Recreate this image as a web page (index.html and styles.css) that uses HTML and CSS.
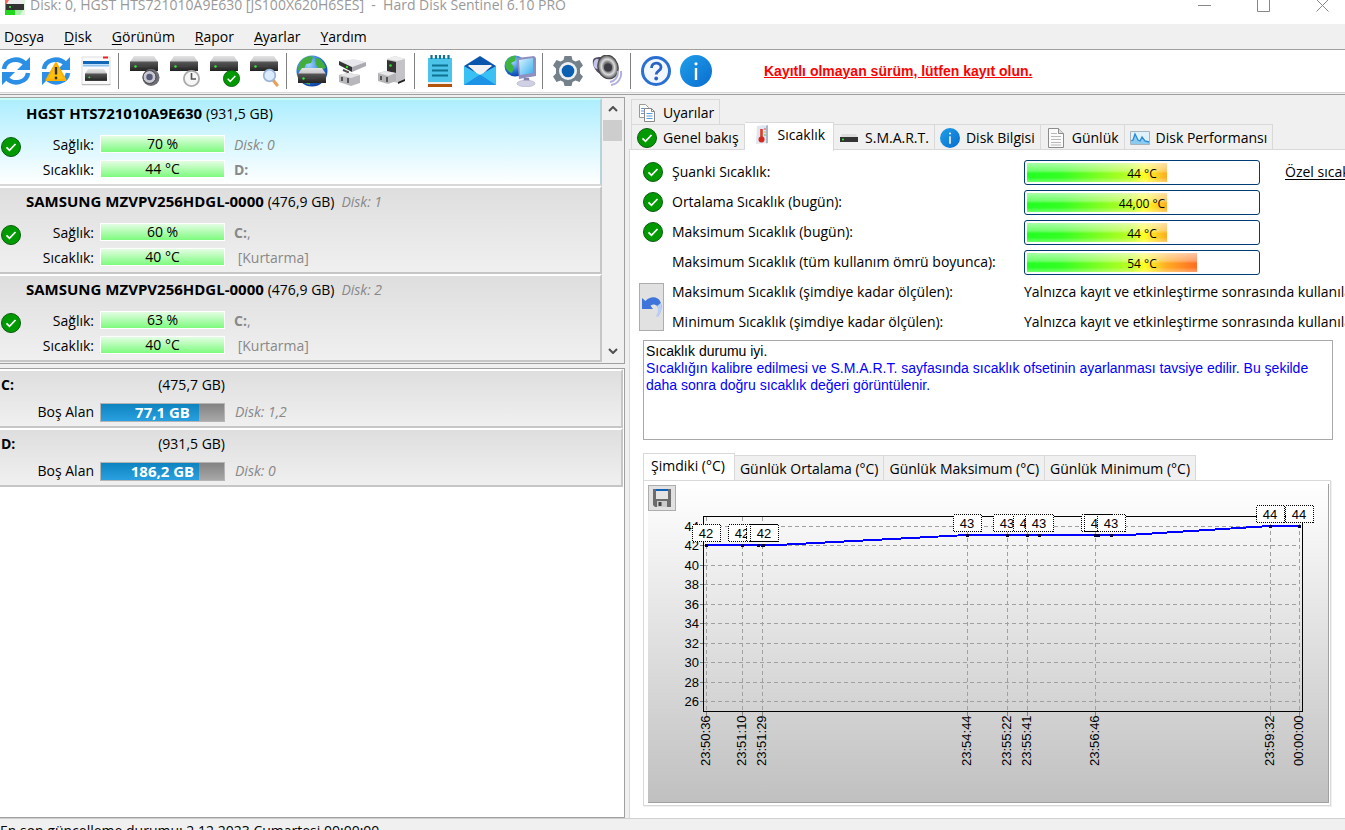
FILE: index.html
```html
<!DOCTYPE html>
<html lang="tr">
<head>
<meta charset="utf-8">
<title>Hard Disk Sentinel 6.10 PRO</title>
<link rel="stylesheet" href="styles.css">
</head>
<body>
<svg class="defs" aria-hidden="true">
  <defs>
    <linearGradient id="gTop" x1="0" y1="0" x2="0" y2="1"><stop offset="0" stop-color="#e4e4e4"/><stop offset="1" stop-color="#c4c4c8"/></linearGradient>
    <linearGradient id="gBody" x1="0" y1="0" x2="0" y2="1"><stop offset="0" stop-color="#5a5a5a"/><stop offset="1" stop-color="#222"/></linearGradient>
    <linearGradient id="gBlue" x1="0" y1="0" x2="1" y2="1"><stop offset="0" stop-color="#1fa0e8"/><stop offset="1" stop-color="#0a6cd0"/></linearGradient>
    <linearGradient id="gSky" x1="0" y1="0" x2="1" y2="1"><stop offset="0" stop-color="#d8f4ff"/><stop offset="1" stop-color="#3fb0ee"/></linearGradient>
    <radialGradient id="gGlobe" cx=".4" cy=".3" r=".8"><stop offset="0" stop-color="#9fd4ff"/><stop offset=".6" stop-color="#1f6fd0"/><stop offset="1" stop-color="#0a2f90"/></radialGradient>
    <radialGradient id="gCone"><stop offset="0" stop-color="#333"/><stop offset=".4" stop-color="#777"/><stop offset=".65" stop-color="#ddd"/><stop offset="1" stop-color="#555"/></radialGradient>
    <linearGradient id="gChart" x1="0" y1="0" x2="0" y2="1"><stop offset="0" stop-color="#fff"/><stop offset="1" stop-color="#c0c0c0"/></linearGradient>
    <symbol id="ok" viewBox="0 0 20 20"><circle cx="10" cy="10" r="9.5" fill="#009a00" stroke="#0b5c10"/><path d="M5.5 10.3l3 3 6-6.3" fill="none" stroke="#fff" stroke-width="1.8"/></symbol>
    <symbol id="info" viewBox="0 0 32 32"><circle cx="16" cy="16" r="16" fill="url(#gBlue)"/><path d="M16 13v12" stroke="#fff" stroke-width="2.4"/><circle cx="16" cy="8.8" r="1.6" fill="#fff"/></symbol>
    <symbol id="disk" viewBox="0 0 28 15"><path d="M4 0h20l4 6H0z" fill="url(#gTop)"/><path d="M0 5.5h28V15H0z" fill="url(#gBody)"/><path d="M1 10.5h17" stroke="#444"/><circle cx="5.5" cy="10.5" r="1.2" fill="#2ef02e"/></symbol>
    <symbol id="arrows" viewBox="0 0 32 32"><g fill="none" stroke="#2c8fe6" stroke-width="4.5"><path d="M4 14C5 5 18 1 25.500 9"/><path d="M28 18C27 27 14 31 6.500 23"/></g><path d="M30 2v13H17zM2 30V17h13z" fill="#2c8fe6"/></symbol>
    <symbol id="undo" viewBox="0 0 20 20"><path d="M0 1l3.500 3C8-1 16-1 18.500 5c2 5 .5 11-3 15 1.500-5 1.500-8.500-.5-11-1.800-2-4.500-2-6.500-.2L11 12H0z" fill="#3f74da"/><path d="M18.800 6c1.800 5 .2 10.500-3.300 14l-1.500-.5c2-4 2.500-8 1-10.500z" fill="#b9cff5"/></symbol>
    <symbol id="page" viewBox="0 0 16 20"><path d="M.5.5h10l5 5v14H.5z" fill="#fbfbfb" stroke="#8c8c8c"/><path d="M10.500.5v5h5" fill="#ddd" stroke="#8c8c8c"/><path d="M3 5.500h6M3 8.500h10M3 11.500h10M3 14.500h10M3 17h10" stroke="#b8b8b8"/></symbol>
  </defs>
</svg>
<div class="app">
  <header class="titlebar">
    <svg class="app-icon" viewBox="0 0 20 20"><path d="M0 0h20L0 20z" fill="#f66"/><path d="M20 0v20H0z" fill="#dff5df"/><path d="M0 20V8l10 5v7z" fill="#20d820"/><path d="M10 12l8 3-3 5h-5z" fill="#a6f0a6"/><path d="M4 5h12l3 5H1z" fill="#eee"/><path d="M1 9h18v6H1z" fill="#333"/><circle cx="5" cy="12" r="1" fill="#3f3"/></svg>
    <h1 class="title">Disk: 0, HGST HTS721010A9E630 [JS100X620H6SES] &nbsp;- &nbsp;Hard Disk Sentinel 6.10 PRO</h1>
    <div class="window-buttons">
      <button aria-label="Simge durumuna küçült"><svg viewBox="0 0 13 13"><path d="M0 6.500h13"/></svg></button>
      <button aria-label="Ekranı kapla"><svg viewBox="0 0 13 13"><path d="M.5.5h12v12H.5z"/></svg></button>
      <button aria-label="Kapat"><svg viewBox="0 0 13 13"><path d="M.5.5l12 12M12.500.5l-12 12"/></svg></button>
    </div>
  </header>
  <nav class="menubar">
    <button>D<u>o</u>sya</button><button><u>D</u>isk</button><button><u>G</u>örünüm</button><button><u>R</u>apor</button><button><u>A</u>yarlar</button><button><u>Y</u>ardım</button>
  </nav>
  <div class="toolbar" role="toolbar">
    <button aria-label="Yenile"><svg viewBox="0 0 32 32"><use href="#arrows"/></svg></button>
    <button aria-label="Uyarıları yenile"><svg viewBox="0 0 32 32"><use href="#arrows"/><path d="M16 8l9.500 17h-19z" fill="#ffc20e" stroke="#ffb000" stroke-width="2" stroke-linejoin="round"/><path d="M16 12v7.500" stroke="#333" stroke-width="2.4"/><circle cx="16" cy="23" r="1.400" fill="#333"/></svg></button>
    <button aria-label="Küçük pencere"><svg viewBox="0 0 32 32"><path d="M2 2h28v28H2z" fill="#fafafa" stroke="#ddd"/><path d="M2 29.500h28.500" stroke="#bbb"/><path d="M23 2.500h5" stroke="#e22" stroke-width="2"/><path d="M3 7.500h26" stroke="#1267b8" stroke-width="3"/><path d="M3 10.500h26" stroke="#8fc4f0" stroke-width="2"/><use href="#disk" x="5" y="14" width="22" height="12"/></svg></button>
    <i class="sep"></i>
    <button aria-label="Akustik ayarlar"><svg viewBox="0 0 32 32"><use href="#disk" x="2" y="1" width="28" height="15"/><circle cx="23" cy="22.500" r="8.500" fill="#6d6d75"/><circle cx="21.500" cy="22" r="6.500" fill="#c8c8d4" stroke="#444"/><circle cx="21.500" cy="22" r="3.200" fill="#555b78"/></svg></button>
    <button aria-label="Zamanlanmış test"><svg viewBox="0 0 32 32"><use href="#disk" x="2" y="1" width="28" height="15"/><circle cx="23.500" cy="23.500" r="7.600" fill="#f6f6f6" stroke="#aaa" stroke-width="1.800"/><path d="M23.500 18v6h4.500" fill="none" stroke="#555" stroke-width="1.600"/></svg></button>
    <button aria-label="Disk testi"><svg viewBox="0 0 32 32"><use href="#disk" x="2" y="1" width="28" height="15"/><use href="#ok" x="15" y="15" width="17" height="17"/></svg></button>
    <button aria-label="Yüzey testi"><svg viewBox="0 0 32 32"><use href="#disk" x="2" y="1" width="28" height="15"/><path d="M25 25l4 5" stroke="#e5a05a" stroke-width="3.200" stroke-linecap="round"/><circle cx="21.500" cy="20.500" r="5.800" fill="#d9edff" stroke="#9db6d6" stroke-width="1.800"/></svg></button>
    <i class="sep"></i>
    <button aria-label="Ağ diski"><svg viewBox="0 0 32 32"><circle cx="16" cy="16" r="15.500" fill="url(#gGlobe)"/><path d="M3 9C7 2 14 0 17 2l-2 6-5 1-3 7-5-1zM19 3c6 0 9 5 11 10l-6 2-4-5zM6 27l8-1v4z" fill="#42ad3c"/><use href="#disk" x="2" y="13" width="28" height="15"/></svg></button>
    <button aria-label="Disk bağlantısı"><svg viewBox="0 0 32 32"><path d="M3 6l15-2 12 3-14 5z" fill="#e8e8ec"/><path d="M3 6l13 6v5L3 10z" fill="#333"/><path d="M16 12l14-5v4l-14 6z" fill="#aaaab0"/><circle cx="11" cy="12" r="1.200" fill="#2ee02e"/><path d="M7 15l5 2-1 4" fill="none" stroke="#555" stroke-width="2"/><path d="M3 20l9-2 12 2v8l-9 3-12-4z" fill="#b8b8bc"/><path d="M3 20l9-2 12 2-9 3z" fill="#e4e4e6"/><path d="M6 22v4M12 23v5" stroke="#555" stroke-width="2"/></svg></button>
    <button aria-label="Disk yuvası"><svg viewBox="0 0 32 32"><path d="M11 4l8-3 10 3v21l-7 3-11-3z" fill="#c4c4c8"/><path d="M11 4l8-3 10 3-8 2z" fill="#eee"/><path d="M11 5l9 2v13l-9-3z" fill="#333"/><circle cx="14.500" cy="10.500" r="1.300" fill="#2ee02e"/><path d="M22 27l7-3v2l-7 3z" fill="#222"/><path d="M2 18l8-2 10 2v8l-8 3-10-3z" fill="#b4b4b8"/><path d="M2 18l8-2 10 2-8 3z" fill="#e8e8ea"/><path d="M5 21v4M11 22v5" stroke="#555" stroke-width="2"/></svg></button>
    <i class="sep"></i>
    <button aria-label="Rapor"><svg viewBox="0 0 32 32"><path d="M4 3h24v24H4z" fill="#4cc3e8"/><path d="M4 27h24v2H4z" fill="#eee"/><path d="M4 29h24v3H4z" fill="#b3540e"/><path d="M7.500 0v4M12 0v4M16 0v4M20 0v4M24.500 0v4" stroke="#14708f" stroke-width="2.200"/><path d="M8 10.500h16M8 15.500h16M8 20.500h16" stroke="#0e7391" stroke-width="2"/></svg></button>
    <button aria-label="E-posta"><svg viewBox="0 0 32 32"><path d="M0 11L16 1l16 10v8H0z" fill="#0b56ad"/><path d="M4 10h24L16 22z" fill="#f2f2f2"/><path d="M0 11l16 9 16-9v19H0z" fill="#39c0f4"/><path d="M4 11h24L16 19z" fill="#f2f2f2"/><path d="M0 30l16-10.500L32 30z" fill="#1c93e4"/></svg></button>
    <button aria-label="Ağ"><svg viewBox="0 0 32 32"><circle cx="11" cy="11" r="10.500" fill="url(#gGlobe)"/><path d="M1 9c2-6 7-9 11-8l-1 5-4 2 3 4-2 6c-4-1-7-5-7-9z" fill="#3eb53e"/><path d="M13 3l17-2 2 2v18l-17 3z" fill="#8f8fc0"/><path d="M15 5l14-2v15l-13 2z" fill="url(#gSky)"/><path d="M20 23h5l1 5h-7z" fill="#8080a8"/><ellipse cx="22" cy="28.500" rx="9" ry="3.300" fill="#d0d0e4" stroke="#a8a8c4" stroke-width=".6"/></svg></button>
    <i class="sep"></i>
    <button aria-label="Ayarlar"><svg viewBox="0 0 32 32"><path d="M12.500 1h7l1 4 3 1.600 4-1.600 3.500 5.500-3 3v5l3 3-3.500 5.500-4-1.600-3 1.600-1 4h-7l-1-4-3-1.600-4 1.600L1 21.500l3-3v-5l-3-3L4.500 5l4 1.600 3-1.600z" fill="#74808a"/><circle cx="16" cy="16" r="9" fill="#eef1f4"/><circle cx="16" cy="16" r="6.300" fill="#0c60b4"/></svg></button>
    <button aria-label="Ses"><svg viewBox="0 0 32 32"><path d="M1 5c1-3 5-3 8-3l7 18-8-1C3 16 0 10 1 5z" fill="#55506e"/><ellipse cx="5" cy="9" rx="3.500" ry="5" fill="#c5c5ea"/><ellipse cx="16" cy="12" rx="10" ry="12" transform="rotate(-18 16 12)" fill="url(#gCone)" stroke="#444"/><circle cx="16" cy="12.500" r="4" fill="#3c3c44"/><path d="M18 27c5-1 8-5 8-11M19 30c7-1 11-7 10-14" fill="none" stroke="#b0b0dc" stroke-width="2"/></svg></button>
    <i class="sep"></i>
    <button aria-label="Yardım"><svg viewBox="0 0 32 32"><circle cx="16" cy="16" r="13.500" fill="#f2f7ff" stroke="#2a6fd2" stroke-width="3"/><path d="M11.500 13c0-6.500 9.500-6 9.500-.8 0 3.800-4.800 3.600-4.800 7.300" fill="none" stroke="#2a62c4" stroke-width="2.800"/><circle cx="16.200" cy="23.500" r="1.900" fill="#2a62c4"/></svg></button>
    <button aria-label="Bilgi"><svg viewBox="0 0 32 32"><use href="#info"/></svg></button>
    <a class="register" href="#">Kayıtlı olmayan sürüm, lütfen kayıt olun.</a>
  </div>
  <main class="main">
    <section class="left">
      <div class="disks">
        <div class="disk-list">
          <article class="disk selected">
            <h2 class="disk-name">HGST HTS721010A9E630 <span>(931,5 GB)</span></h2>
            <svg class="status"><use href="#ok"/></svg>
            <span class="label">Sağlık:</span><span class="meter">70 %</span><em class="note">Disk: 0</em>
            <span class="label">Sıcaklık:</span><span class="meter">44 °C</span><span class="note"><b>D:</b></span>
          </article>
          <article class="disk">
            <h2 class="disk-name">SAMSUNG MZVPV256HDGL-0000 <span>(476,9 GB)</span> <em>Disk: 1</em></h2>
            <svg class="status"><use href="#ok"/></svg>
            <span class="label">Sağlık:</span><span class="meter">60 %</span><span class="note"><b>C:</b>,</span>
            <span class="label">Sıcaklık:</span><span class="meter">40 °C</span><span class="note">&nbsp;[Kurtarma]</span>
          </article>
          <article class="disk">
            <h2 class="disk-name">SAMSUNG MZVPV256HDGL-0000 <span>(476,9 GB)</span> <em>Disk: 2</em></h2>
            <svg class="status"><use href="#ok"/></svg>
            <span class="label">Sağlık:</span><span class="meter">63 %</span><span class="note"><b>C:</b>,</span>
            <span class="label">Sıcaklık:</span><span class="meter">40 °C</span><span class="note">&nbsp;[Kurtarma]</span>
          </article>
        </div>
        <div class="scrollbar">
          <button aria-label="Yukarı"><svg viewBox="0 0 10 6"><path d="M1 5l4-4 4 4"/></svg></button>
          <div class="track"><div class="thumb"></div></div>
          <button aria-label="Aşağı"><svg viewBox="0 0 10 6"><path d="M1 1l4 4 4-4"/></svg></button>
        </div>
      </div>
      <div class="volumes">
        <article class="volume">
          <b class="drive">C:</b><span class="size">(475,7 GB)</span>
          <span class="label">Boş Alan</span><span class="space"><b>77,1 GB</b></span><em class="note">Disk: 1,2</em>
        </article>
        <article class="volume">
          <b class="drive">D:</b><span class="size">(931,5 GB)</span>
          <span class="label">Boş Alan</span><span class="space"><b>186,2 GB</b></span><em class="note">Disk: 0</em>
        </article>
      </div>
    </section>
    <section class="right">
      <div class="tabs" role="tablist">
        <div class="tab-row">
          <button class="tab" role="tab"><svg class="ico" viewBox="0 0 20 20"><path d="M2.500 1.500h6l3 3v10h-9z" fill="#fff" stroke="#999"/><path d="M4 5.500h5M4 8h5M4 10.500h5" stroke="#5b9be0"/><path d="M7.500 5.500h7l3 3v10h-10z" fill="#fff" stroke="#888"/><path d="M14.500 5.500v3h3" fill="none" stroke="#888"/><path d="M9.500 10.500h6M9.500 13h6M9.500 15.500h6" stroke="#5b9be0"/></svg>Uyarılar</button>
        </div>
        <div class="tab-row">
          <button class="tab" role="tab"><svg class="ico"><use href="#ok"/></svg>Genel bakış</button>
          <button class="tab active" role="tab" aria-selected="true"><svg class="ico" viewBox="0 0 20 20"><path d="M5 1l11-1v18L4 19z" fill="#dfe6ef"/><path d="M14 1l2-1v18l-2 .5z" fill="#a9b8c9"/><path d="M9.500 4v10" stroke="#e03a2c" stroke-width="2.600"/><circle cx="9.500" cy="14.500" r="3" fill="#d8281c"/><path d="M12 4h2" stroke="#e44"/><path d="M12 7h2" stroke="#ea3"/><path d="M12 10h2" stroke="#4c4"/></svg>Sıcaklık</button>
          <button class="tab" role="tab"><svg class="ico" viewBox="0 0 20 20"><path d="M3 6h14l2 4H1z" fill="#ddd"/><path d="M1 9h18v5H1z" fill="#333"/><circle cx="4" cy="11.500" r=".9" fill="#3f3"/></svg>S.M.A.R.T.</button>
          <button class="tab" role="tab"><svg class="ico"><use href="#info"/></svg>Disk Bilgisi</button>
          <button class="tab" role="tab"><svg class="ico"><use href="#page"/></svg>Günlük</button>
          <button class="tab" role="tab"><svg class="ico" viewBox="0 0 20 20"><path d="M.5 3.500h19v13H.5z" fill="#dff1fb" stroke="#a8b4bc"/><path d="M1 14l2-2 2-6 3 6 2 1 2-4 3 4 4 1v2H1z" fill="#8ccbf0"/><path d="M1 13l2-1 2-6 3 6 2 1 2-4 3 4 4 1" fill="none" stroke="#2a8ad8" stroke-width="1.300"/></svg>Disk Performansı</button>
        </div>
      </div>
      <div class="page">
        <div class="readings">
          <svg class="check"><use href="#ok"/></svg><span>Şuanki Sıcaklık:</span>
          <div class="gauge"><div class="fill p44"></div><span>44 °C</span></div><a class="custom" href="#">Özel sıcaklık</a>
          <svg class="check"><use href="#ok"/></svg><span>Ortalama Sıcaklık (bugün):</span>
          <div class="gauge"><div class="fill p44"></div><span>44,00 °C</span></div><i></i>
          <svg class="check"><use href="#ok"/></svg><span>Maksimum Sıcaklık (bugün):</span>
          <div class="gauge"><div class="fill p44"></div><span>44 °C</span></div><i></i>
          <i></i><span>Maksimum Sıcaklık (tüm kullanım ömrü boyunca):</span>
          <div class="gauge"><div class="fill p54"></div><span>54 °C</span></div><i></i>
          <button class="undo" aria-label="Sıfırla"><svg><use href="#undo"/></svg></button>
          <span>Maksimum Sıcaklık (şimdiye kadar ölçülen):</span><span class="wide">Yalnızca kayıt ve etkinleştirme sonrasında kullanılabilir</span>
          <span>Minimum Sıcaklık (şimdiye kadar ölçülen):</span><span class="wide">Yalnızca kayıt ve etkinleştirme sonrasında kullanılabilir</span>
        </div>
        <div class="advice"><p>Sıcaklık durumu iyi.</p><p class="hint">Sıcaklığın kalibre edilmesi ve S.M.A.R.T. sayfasında sıcaklık ofsetinin ayarlanması tavsiye edilir. Bu şekilde daha sonra doğru sıcaklık değeri görüntülenir.</p></div>
        <div class="chart-tabs" role="tablist">
          <button class="tab active" role="tab" aria-selected="true">Şimdiki (°C)</button><button class="tab" role="tab">Günlük Ortalama (°C)</button><button class="tab" role="tab">Günlük Maksimum (°C)</button><button class="tab" role="tab">Günlük Minimum (°C)</button>
        </div>
        <div class="chart-page">
          <button class="save" aria-label="Kaydet"><svg viewBox="0 0 18 18"><path d="M0 0h18v18H2l-2-2z" fill="#6c6c6c"/><path d="M3 0h12v2H3z" fill="#0f62b8"/><path d="M3 2h12v8H3z" fill="#e4e4e4"/><path d="M4 12h10v6H4z" fill="#ccc"/><path d="M5.500 13h3v4h-3z" fill="#444"/></svg></button>
          <svg class="chart" viewBox="0 0 681 319" role="img" aria-label="Sıcaklık grafiği">
            <rect width="681" height="319" fill="url(#gChart)"/>
            <path d="M680.500 0v318.500H0" fill="none" stroke="#a0a0a0"/>
            <path class="grid" d="M56 42.500H651M56 61.500H651M56 81.500H651M56 100.500H651M56 120.500H651M56 139.500H651M56 159.500H651M56 178.500H651M56 198.500H651M56 217.500H651"/>
            <path class="grid" d="M58.500 33V227M94.500 33V227M114.500 33V227M319.500 33V227M359.500 33V227M379.500 33V227M447.500 33V227M622.500 33V227M651.500 33V227"/>
            <path class="tick" d="M52 42.500h3M52 61.500h3M52 81.500h3M52 100.500h3M52 120.500h3M52 139.500h3M52 159.500h3M52 178.500h3M52 198.500h3M52 217.500h3M58.500 228v4M94.500 228v4M114.500 228v4M319.500 228v4M359.500 228v4M379.500 228v4M447.500 228v4M622.500 228v4M651.500 228v4"/>
            <rect class="frame" x="55.500" y="32.500" width="599" height="195"/>
            <g class="axis-y"><text x="51" y="47">44</text><text x="51" y="66">42</text><text x="51" y="86">40</text><text x="51" y="105">38</text><text x="51" y="125">36</text><text x="51" y="144">34</text><text x="51" y="164">32</text><text x="51" y="183">30</text><text x="51" y="203">28</text><text x="51" y="222">26</text></g>
            <g class="axis-x"><text transform="translate(62 282) rotate(-90)">23:50:36</text><text transform="translate(98 282) rotate(-90)">23:51:10</text><text transform="translate(118 282) rotate(-90)">23:51:29</text><text transform="translate(323 282) rotate(-90)">23:54:44</text><text transform="translate(363 282) rotate(-90)">23:55:22</text><text transform="translate(383 282) rotate(-90)">23:55:41</text><text transform="translate(451 282) rotate(-90)">23:56:46</text><text transform="translate(626 282) rotate(-90)">23:59:32</text><text transform="translate(655 282) rotate(-90)">00:00:00</text></g>
            <path class="series" d="M58 61H130L319 51H480L622 42H651"/>
            <path class="points" d="M56.500 61h3M92.500 61h3M108.500 61h3M112.500 61h4M317.500 51h3M357.500 51h3M377.500 51h3M389.500 51h3M445.500 51h3M448.500 51h3M461.500 51h3M620.500 42h3M649.500 42h3"/>
            <g class="tags">
              <rect x="44.500" y="40.500" width="28" height="17"/><text x="58" y="54">42</text>
              <rect x="80.500" y="40.500" width="28" height="17"/><text x="94" y="54">42</text>
              <rect x="98.500" y="40.500" width="28" height="17"/><rect x="102.500" y="40.500" width="28" height="17"/><path d="M102 40.500h28M102 57.500h28"/><text x="116" y="54">42</text>
              <rect x="305.500" y="30.500" width="28" height="17"/><text x="319" y="44">43</text>
              <rect x="345.500" y="30.500" width="28" height="17"/><text x="359" y="44">43</text>
              <rect x="365.500" y="30.500" width="28" height="17"/><text x="379" y="44">43</text>
              <rect x="377.500" y="30.500" width="28" height="17"/><text x="391" y="44">43</text>
              <rect x="433.500" y="30.500" width="28" height="17"/><rect x="436.500" y="30.500" width="28" height="17"/><path d="M436 30.500h28M436 47.500h28"/><text x="450" y="44">43</text>
              <rect x="449.500" y="30.500" width="28" height="17"/><text x="463" y="44">43</text>
              <rect x="608.500" y="21.500" width="28" height="17"/><text x="622" y="35">44</text>
              <rect x="637.500" y="21.500" width="28" height="17"/><text x="651" y="35">44</text>
            </g>
          </svg>
        </div>
      </div>
    </section>
  </main>
  <footer class="statusbar">En son güncelleme durumu: 2.12.2023 Cumartesi 00:00:00</footer>
</div>
</body>
</html>
```

FILE: styles.css
```css
* { box-sizing: border-box; }
html { height: 100%; overflow: hidden; }
body { margin: 0; height: 100%; overflow: hidden; background: #fff; color: #000; font: 14px/20px "Open Sans", "Noto Sans", sans-serif; }
button { margin: 0; padding: 0; border: 0; background: none; color: inherit; font: inherit; }
h1, h2, p { margin: 0; font: inherit; }
.defs { position: absolute; width: 0; height: 0; }

/* The window frame reaches past the top and bottom of the viewport. */
.app { display: flex; flex-direction: column; height: calc(100% + 26px); margin-top: -14px; }

.titlebar { display: flex; align-items: center; height: 38px; padding-left: 5px; flex: none; }
.app-icon { width: 20px; height: 20px; margin-right: 5px; }
.title { flex: 1; color: #999; white-space: nowrap; }
.window-buttons { display: flex; gap: 46px; padding-right: 16px; }
.window-buttons svg { display: block; width: 13px; height: 13px; fill: none; stroke: #888; }

.menubar { display: flex; gap: 20px; flex: none; height: 26px; padding: 0 4px; background: #f0f0f0; border-bottom: 1px solid #a0a0a0; }
.menubar u { text-underline-offset: 2px; }

.toolbar { display: flex; align-items: center; flex: none; height: 45px; padding-bottom: 3px; background: #fff; border-bottom: 1px solid #a0a0a0; box-shadow: inset 0 -1px #f0f0f0, inset 0 -2px #d8d8d8; }
.toolbar button { display: flex; justify-content: center; width: 40px; flex: none; }
.toolbar button:first-child { width: 36px; justify-content: flex-start; }
.toolbar svg { width: 32px; height: 32px; }
.sep { width: 6px; height: 36px; flex: none; border-left: 1px solid #808080; margin-left: 2px; }
.register { margin-left: 48px; color: #f00; font: bold 14px/20px "Liberation Sans", sans-serif; white-space: nowrap; }

.main { display: grid; grid-template-columns: 625fr 720fr; flex: 1; min-height: 0; padding-top: 2px; background: #f0f0f0; }

.left { display: flex; flex-direction: column; gap: 4px; min-width: 0; }
.disks { display: flex; flex: none; border: solid #a0a0a0; border-width: 1px 1px 1px 0; padding: 0 2px 1px 0; background: #f0f0f0; }
.disk-list { flex: 1; }
.disk { display: grid; grid-template-columns: 26px 68px 125px 1fr; grid-template-rows: 32px 25px 25px; height: 88px; align-items: center; background: linear-gradient(#dedede, #f0f0f0); border: solid #c6c6c6; border-width: 2px 2px 2px 0; border-top-color: #fff; }
.disk.selected { background: linear-gradient(#aeeeff, #fff); border-color: #d8d8d8; border-top-color: #c8fdf8; border-right-color: #b4d4dc; }
.disk-name { grid-column: 2 / 5; align-self: start; padding-top: 3px; font-weight: bold; font-size: 15px; white-space: nowrap; }
.disk-name span, .disk-name em { font-weight: normal; font-size: 14px; }
.disk-name em { color: #888; margin-left: 3px; }
.status { grid-column: 1; grid-row: 2 / 4; width: 20px; height: 20px; margin: 0 0 20px 1px; }
.disk .label { grid-column: 2; }
.label { text-align: right; }
.meter { height: 18px; line-height: 16px; margin: 0 -6px 2px 6px; border: 1px solid #fff; background: linear-gradient(#e4fde4, #7dfb7d); text-align: center; }
.note { color: #888; padding-left: 15px; white-space: nowrap; }

.scrollbar { display: flex; flex-direction: column; width: 20px; padding-left: 1px; background: #f0f0f0; }
.scrollbar button { display: flex; align-items: center; justify-content: center; height: 22px; flex: none; }
.scrollbar svg { width: 10px; height: 6px; fill: none; stroke: #505050; stroke-width: 2; }
.track { flex: 1; }
.thumb { height: 21px; background: #cdcdcd; }

.volumes { flex: 1; background: #fff; border: solid #a0a0a0; border-width: 1px 1px 1px 0; padding-right: 1px; }
.volume { display: grid; grid-template-columns: 94px 131px 1fr; grid-template-rows: 28px 26px; align-items: center; height: 59px; background: linear-gradient(#dedede, #f0f0f0); border: solid #c6c6c6; border-width: 2px 2px 2px 0; border-top-color: #fff; }
.drive { padding-left: 1px; }
.size { text-align: right; }
.volume .label { grid-column: 1; }
.volume .note { padding-left: 10px; }
.space { height: 19px; font-size: 15px; line-height: 17px; margin-left: 6px; border: 1px solid #b4b4b4; background: linear-gradient(#0d84bf, #2aa0e0) 0 0 / 80% 100% no-repeat, linear-gradient(#838383, #a8a8a8); color: #fff; text-align: center; }

.right { display: flex; flex-direction: column; min-width: 0; overflow: hidden; padding-left: 4px; }
.tabs { padding: 2px 0 0 2px; }
.tab-row { display: flex; height: 25px; }
.tab { display: flex; align-items: center; gap: 6px; padding: 2px 5px 0 5px; border: 1px solid #d9d9d9; border-bottom: 0; border-left-width: 0; background: #f0f0f0; white-space: nowrap; flex: none; }
.tab:first-child { border-left-width: 1px; }
.tab.active { position: relative; height: 29px; margin-top: -2px; padding: 0 8px 4px 7px; background: #fff; }
.ico { width: 20px; height: 20px; }
.page { display: flex; flex-direction: column; flex: 1; min-height: 0; padding: 7px 12px 0 9px; background: #fff; border: solid #d9d9d9; border-width: 1px 0 0 1px; }

.readings { display: grid; grid-template-columns: 33px 352px 236px auto; grid-auto-rows: 30px; align-items: center; white-space: nowrap; }
.check { width: 20px; height: 20px; margin-left: 4px; }
.gauge { position: relative; height: 25px; padding: 2px; border: 1px solid #003c74; border-radius: 3px; }
.gauge span { position: absolute; inset: 0; font-size: 12px; line-height: 25px; text-align: center; }
.fill { height: 100%; background: linear-gradient(#ffffff99, #ffffff55 40%, transparent 55%, transparent 75%, #ffffff55), linear-gradient(90deg, #2f2, #3f2 15%, #bf2 45%, #ff2 51%, #fa2 61%, #f62 75%) 0 0 / 230px 100%; }
.p44 { width: 61%; }
.p54 { width: 74%; }
.custom { margin-left: 25px; color: #000; text-underline-offset: 2px; }
.wide { grid-column: 3 / 5; width: 0; }
.undo { grid-row: 5 / 7; display: flex; align-items: center; justify-content: center; width: 25px; height: 48px; background: #e1e1e1; border: 1px solid #adadad; }
.undo svg { width: 20px; height: 20px; flex: none; }

.advice { height: 100px; flex: none; margin: 3px 0 13px 4px; padding: 2px; border: 1px solid #a9a9a9; font: 14px/17px "Liberation Sans", Arial, sans-serif; }
.hint { color: #00f; }

.chart-tabs { display: flex; height: 25px; flex: none; margin: 2px 0 0 4px; }
.chart-tabs .tab { padding: 1px 5px 0 5px; }
.chart-tabs .tab.active { padding: 0 9px 4px 7px; height: 28px; }
.chart-page { position: relative; margin: 0 2px 0 4px; padding: 3px 1px 2px 4px; border: 1px solid #d9d9d9; box-shadow: 1px 1px #f0f0f0; }
.save { position: absolute; left: 4px; top: 4px; display: flex; align-items: center; justify-content: center; width: 28px; height: 26px; background: #e1e1e1; border: 1px solid #adadad; }
.save svg { width: 18px; height: 18px; }
.chart { display: block; width: 100%; height: auto; font: 13px "Liberation Sans", Arial, sans-serif; shape-rendering: crispEdges; }
.grid { fill: none; stroke: #a0a0a0; stroke-dasharray: 4 3; }
.tick { stroke: #808080; }
.frame { fill: none; stroke: #000; }
.axis-y { text-anchor: end; }
.series { fill: none; stroke: #00f; stroke-width: 2; }
.points { stroke: #000040; stroke-width: 3; }
.tags { text-anchor: middle; }
.tags rect { fill: #fff; stroke: #000; stroke-dasharray: 1 1; }
.tags path { stroke: #000; }

.statusbar { flex: none; height: 24px; padding-top: 2px; line-height: 20px; background: #f0f0f0; border-top: 1px solid #d0d0d0; white-space: nowrap; }
```
